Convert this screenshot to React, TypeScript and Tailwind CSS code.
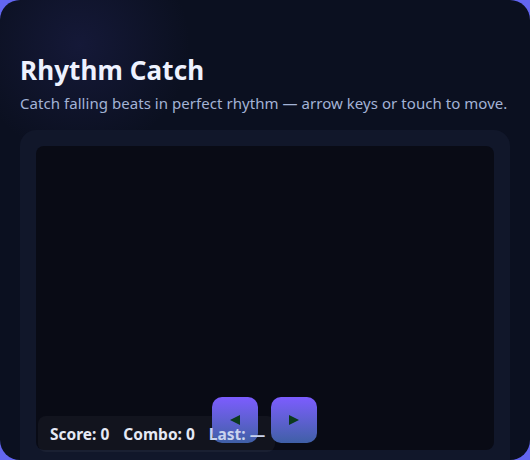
import React from "react";

export default function App() {
  return (
    <div className="w-[530px] h-[460px] bg-[#6366f1] overflow-hidden" style={{ fontFamily: '"Segoe UI", "Noto Sans", sans-serif' }}>
      <div className="relative w-[530px] h-[460px] rounded-[20px] overflow-hidden bg-[#0b1020]">
        <div className="absolute inset-0 bg-[radial-gradient(circle_at_80px_45px,rgba(55,55,140,0.22),transparent_110px)]" />
        <div className="relative px-5 pt-[52px]">
          <h1 className="text-[26px] leading-[36px] font-bold tracking-[0.1px] text-[#eef2ff]">Rhythm Catch</h1>
          <p className="mt-[4px] text-[15px] leading-[22px] tracking-[0.05px] text-[#a3b3d6]">
            Catch falling beats in perfect rhythm — arrow keys or touch to move.
          </p>
          <div className="mt-[16px] rounded-[16px] bg-[#11172a] p-4 pb-8">
            <div className="relative h-[304px] rounded-[8px] bg-[#090b15]">
              <div className="absolute left-[2px] top-[270px] w-[237px] h-[36px] rounded-[8px] bg-[rgba(255,255,255,0.04)]" />
              <div className="absolute left-[176px] top-[251px] flex gap-[13px]">
                <button className="w-[46px] h-[46px] rounded-[10px] bg-gradient-to-b from-[#7c5cff] to-[#3f5fa6] flex items-center justify-center">
                  <svg width="12" height="12" viewBox="0 0 12 12"><path d="M11 1 L1 6 L11 11 Z" fill="#0b3a1d" /></svg>
                </button>
                <button className="w-[46px] h-[46px] rounded-[10px] bg-gradient-to-b from-[#7c5cff] to-[#3f5fa6] flex items-center justify-center">
                  <svg width="12" height="12" viewBox="0 0 12 12"><path d="M1 1 L11 6 L1 11 Z" fill="#0b3a1d" /></svg>
                </button>
              </div>
              <div className="absolute left-[14px] top-[277px] flex gap-[14px] text-[15.5px] leading-[22px] font-bold">
                <span className="text-[#e5e9f5]">Score: 0</span>
                <span className="text-[#e5e9f5]">Combo: 0</span>
                <span className="text-[#c9d3ee]">Last: —</span>
              </div>
            </div>
          </div>
        </div>
      </div>
    </div>
  );
}
